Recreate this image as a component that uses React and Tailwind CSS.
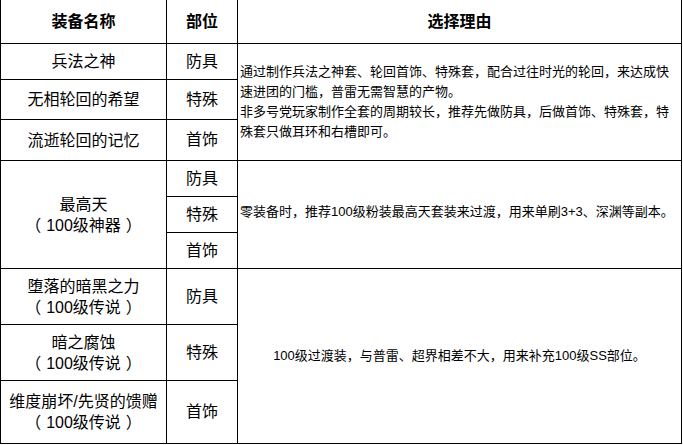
const rows = [
  { name: ["兵法之神"], part: "防具" },
  { name: ["无相轮回的希望"], part: "特殊" },
  { name: ["流逝轮回的记忆"], part: "首饰" },
];

const legends = [
  { name: "堕落的暗黑之力", part: "防具" },
  { name: "暗之腐蚀", part: "特殊" },
  { name: "维度崩坏/先贤的馈赠", part: "首饰" },
];

const Cell = ({ className = "", children }) => (
  <div className={`bg-white flex items-center justify-center text-center ${className}`}>
    {children}
  </div>
);

// （100级xx） — spaced a little inside the brackets like the original sheet
const Tier = ({ text }) => (
  <span>
    <span className="mr-[5px]">（</span>
    {text}
    <span className="ml-[5px]">）</span>
  </span>
);

const NameCell = ({ title, tier, className = "" }) => (
  <Cell className={`flex-col text-[16px] leading-[21px] ${className}`}>
    <span>{title}</span>
    {tier && <Tier text={tier} />}
  </Cell>
);

export default function App() {
  return (
    <div className="w-[683px] h-[445px] bg-white font-['Liberation_Sans','Noto_Sans_CJK_SC',sans-serif] text-black">
      <div className="w-[682px] grid grid-cols-[165px_70px_443px] grid-rows-[43px_35px_39px_40px_35px_35px_35px_55px_55px_62px] gap-px bg-black border-x border-b border-black">
        {/* header */}
        <Cell className="bg-[#bdd7ee] text-[16px] font-bold">装备名称</Cell>
        <Cell className="bg-[#bdd7ee] text-[16px] font-bold">部位</Cell>
        <Cell className="bg-[#bdd7ee] text-[16px] font-bold">选择理由</Cell>

        {/* 轮回套 */}
        <NameCell title={rows[0].name[0]} />
        <Cell className="text-[16px]">{rows[0].part}</Cell>
        <div className="row-span-3 bg-white flex flex-col justify-center pl-[2px] pr-[6px] text-[13px] leading-[20px]">
          <p>通过制作兵法之神套、轮回首饰、特殊套，配合过往时光的轮回，来达成快速进团的门槛，普雷无需智慧的产物。</p>
          <p>非多号党玩家制作全套的周期较长，推荐先做防具，后做首饰、特殊套，特殊套只做耳环和右槽即可。</p>
        </div>
        {rows.slice(1).map((r) => (
          <div key={r.part} className="contents">
            <NameCell title={r.name[0]} />
            <Cell className="text-[16px]">{r.part}</Cell>
          </div>
        ))}

        {/* 最高天 */}
        <NameCell title="最高天" tier="100级神器" className="row-span-3" />
        <Cell className="text-[16px]">防具</Cell>
        <div className="row-span-3 bg-white flex items-center pl-[2px] text-[13px] leading-[20px] pb-[6px]">
          零装备时，推荐100级粉装最高天套装来过渡，用来单刷3+3、深渊等副本。
        </div>
        <Cell className="text-[16px]">特殊</Cell>
        <Cell className="text-[16px]">首饰</Cell>

        {/* 100级传说 */}
        <NameCell title={legends[0].name} tier="100级传说" />
        <Cell className="text-[16px]">{legends[0].part}</Cell>
        <Cell className="row-span-3 text-[13px] leading-[20px]">
          100级过渡装，与普雷、超界相差不大，用来补充100级SS部位。
        </Cell>
        {legends.slice(1).map((r) => (
          <div key={r.part} className="contents">
            <NameCell title={r.name} tier="100级传说" />
            <Cell className="text-[16px]">{r.part}</Cell>
          </div>
        ))}
      </div>
    </div>
  );
}
